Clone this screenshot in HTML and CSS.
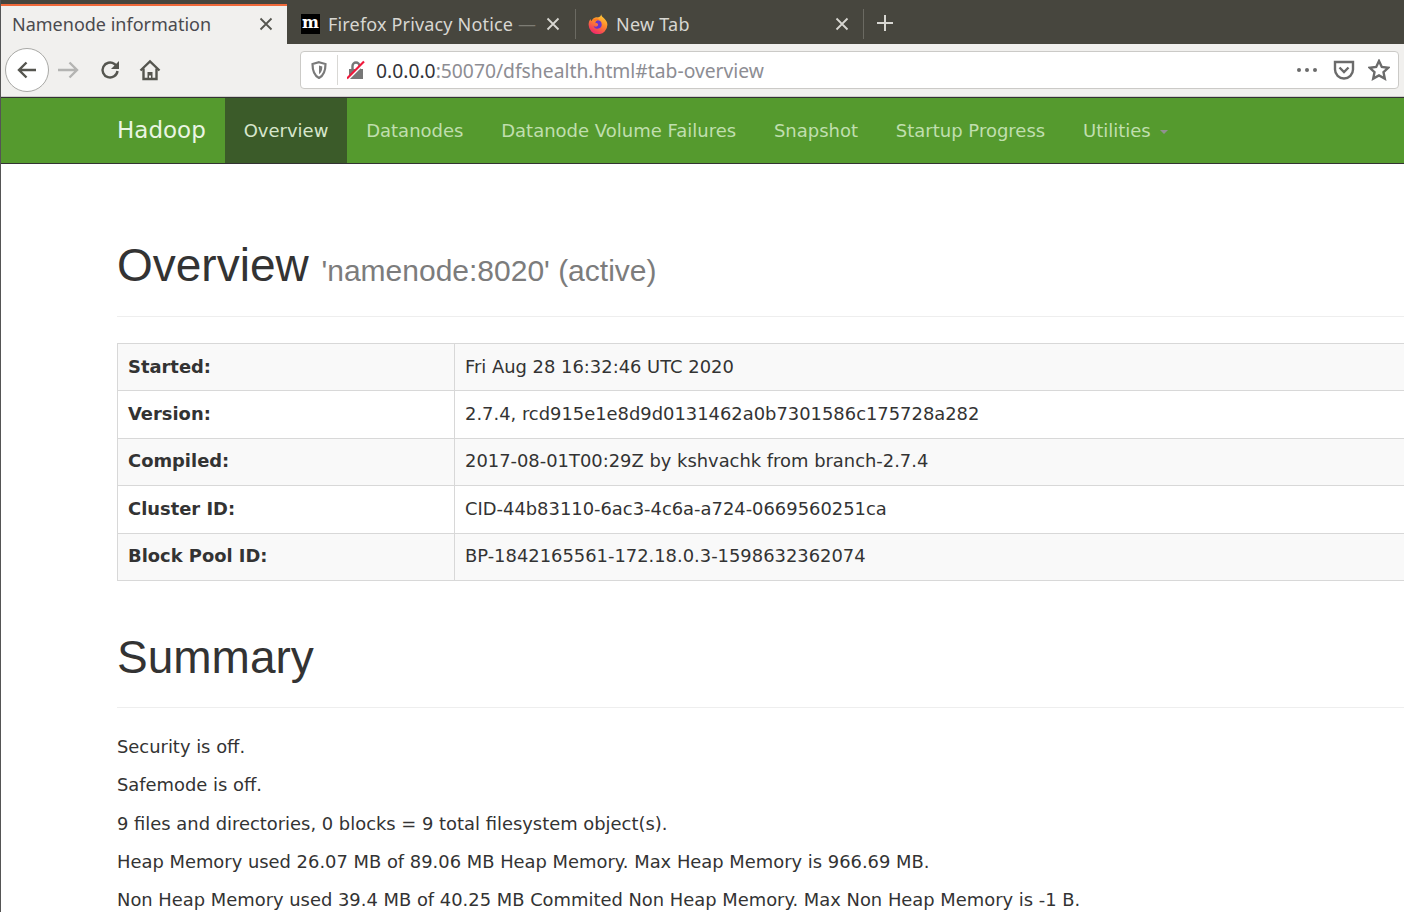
FILE: index.html
```html
<!DOCTYPE html>
<html lang="en">
<head>
    <meta charset="UTF-8">
    <title>Namenode information</title>
    <link rel="stylesheet" href="styles.css">
</head>
<body>
    <div class="tabbar">
        <div class="tab tab-active">
            <span class="tab-title">Namenode information</span>
            <svg class="tab-close" viewBox="0 0 14 14"><path d="M1.500 1.500l11 11M12.500 1.500l-11 11"/></svg>
        </div>
        <div class="tab tab-second">
            <span class="favicon-m">m</span>
            <span class="tab-title">Firefox Privacy Notice <span class="tab-fade">—</span></span>
            <svg class="tab-close" viewBox="0 0 14 14"><path d="M1.500 1.500l11 11M12.500 1.500l-11 11"/></svg>
        </div>
        <div class="tab tab-third">
            <svg class="favicon-fx" viewBox="0 0 20 20">
                <defs>
                    <linearGradient id="fxbody" x1="0.8" y1="0" x2="0.3" y2="1">
                        <stop offset="0" stop-color="#ffd53a"/>
                        <stop offset="0.45" stop-color="#ff8a2a"/>
                        <stop offset="1" stop-color="#f0226e"/>
                    </linearGradient>
                </defs>
                <path d="M13 0c.4 2 1.500 3 3 4.300 2 1.800 3.400 3.800 3.400 6.500A9.300 9.300 0 0 1 .6 10.800C.6 8.500 1.300 6.500 2.600 5c0 1 .4 1.600 1 2C4.500 4.500 7 3 9.800 3.400 11.800 3 13.300 2 13 0z" fill="url(#fxbody)"/>
                <path d="M9.500 6.300a4.200 4.200 0 1 1-4 5.500c1 1 3 1.200 4 .2 1-.8.8-2.300-.5-2.800-.6-.2-1.200-.1-1.700.2.200-1.600.9-2.700 2.200-3.100z" fill="#6a35c9"/>
                <path d="M5 5.500c2.500-1.500 5-1 6.500.2-1.800-.2-3 .4-3.500 1.400-1.200.2-2.400-.4-3-1.600z" fill="#ff7a1f"/>
            </svg>
            <span class="tab-title">New Tab</span>
            <svg class="tab-close" viewBox="0 0 14 14"><path d="M1.500 1.500l11 11M12.500 1.500l-11 11"/></svg>
        </div>
        <svg class="new-tab" viewBox="0 0 18 18"><path d="M9 1v16M1 9h16"/></svg>
    </div>

    <div class="toolbar">
        <div class="back-btn">
            <svg viewBox="0 0 22 22"><path d="M20 11H3M10.500 3.500L3 11l7.500 7.500"/></svg>
        </div>
        <svg class="tool-icon icon-forward" viewBox="0 0 22 22"><path d="M1 11h19M12.500 3.500L20 11l-7.500 7.500"/></svg>
        <svg class="tool-icon icon-reload" viewBox="0 0 22 22"><path d="M18.500 12A7.500 7.500 0 1 1 15.500 5L18 7.500"/><path class="solid" d="M20 2v8h-8z"/></svg>
        <svg class="tool-icon icon-home" viewBox="0 0 22 22"><path d="M1.500 11.500L11 2.500l9.500 9"/><path d="M4.500 9.500V20h13V9.500"/><path class="solid" d="M8.500 20v-7h5v7h-1.500v-3.500h-2V20z"/></svg>
        <div class="urlbar">
            <svg class="url-shield" viewBox="0 0 16 18"><path d="M8 1.200l6.500 1.800c0 7-1.500 11.500-6.500 14-5-2.500-6.500-7-6.500-14z"/><path class="solid" d="M8 4.500l3.300.9c0 3.500-.8 6-3.300 7.800z"/></svg>
            <span class="url-sep"></span>
            <svg class="url-lock" viewBox="0 0 18 20">
                <path class="lock-body" d="M2 9h14v10H2z"/>
                <path class="lock-arc" d="M5.500 9V6a3.500 3.500 0 0 1 7 0v3"/>
                <path class="lock-gap" d="M1 19.500L18 2.500"/>
                <path class="lock-slash" d="M0 18.500L17 1.500"/>
            </svg>
            <span class="url-text"><span class="url-host">0.0.0.0</span>:50070/dfshealth.html#tab-overview</span>
            <svg class="url-icon url-dots" viewBox="0 0 22 6"><circle cx="3" cy="3" r="2"/><circle cx="11" cy="3" r="2"/><circle cx="19" cy="3" r="2"/></svg>
            <svg class="url-icon url-pocket" viewBox="0 0 22 20"><path d="M2 2h18v7.500a9 9 0 0 1-18 0z"/><path d="M6.500 7.500L11 12l4.500-4.500"/></svg>
            <svg class="url-icon url-star" viewBox="0 0 22 22"><path d="M11 2l2.800 6 6.400.8-4.700 4.400 1.300 6.400L11 16.400l-5.800 3.200 1.300-6.400L1.800 8.800 8.200 8z"/></svg>
        </div>
    </div>

    <nav class="navbar">
        <a class="brand">Hadoop</a>
        <a class="nav-link nav-active">Overview</a>
        <a class="nav-link">Datanodes</a>
        <a class="nav-link">Datanode Volume Failures</a>
        <a class="nav-link">Snapshot</a>
        <a class="nav-link">Startup Progress</a>
        <a class="nav-link">Utilities <span class="caret"></span></a>
    </nav>

    <div class="content">
        <div class="page-header">
            <h1>Overview <small>'namenode:8020' (active)</small></h1>
        </div>
        <table class="info">
            <tr><th>Started:</th><td>Fri Aug 28 16:32:46 UTC 2020</td></tr>
            <tr><th>Version:</th><td>2.7.4, rcd915e1e8d9d0131462a0b7301586c175728a282</td></tr>
            <tr><th>Compiled:</th><td>2017-08-01T00:29Z by kshvachk from branch-2.7.4</td></tr>
            <tr><th>Cluster ID:</th><td>CID-44b83110-6ac3-4c6a-a724-0669560251ca</td></tr>
            <tr><th>Block Pool ID:</th><td>BP-1842165561-172.18.0.3-1598632362074</td></tr>
        </table>
        <div class="page-header summary-header">
            <h1>Summary</h1>
        </div>
        <p>Security is off.</p>
        <p>Safemode is off.</p>
        <p>9 files and directories, 0 blocks = 9 total filesystem object(s).</p>
        <p>Heap Memory used 26.07 MB of 89.06 MB Heap Memory. Max Heap Memory is 966.69 MB.</p>
        <p>Non Heap Memory used 39.4 MB of 40.25 MB Commited Non Heap Memory. Max Non Heap Memory is -1 B.</p>
    </div>
</body>
</html>
```

FILE: styles.css
```css
html, body {
    margin: 0;
    height: 912px;
    overflow: hidden;
}
body {
    font-family: "DejaVu Sans", sans-serif;
    background-color: #fff;
    color: #333;
    border-left: 1px solid #555;
}

/* browser tabs */
.tabbar {
    height: 44px;
    display: flex;
    background-color: #47463e;
    font-family: "Noto Sans", sans-serif;
    font-size: 18px;
    color: #d8d7d2;
}
.tab {
    display: flex;
    align-items: center;
    box-sizing: border-box;
    flex: none;
}
.tab-active {
    width: 286px;
    padding: 0 14px 2px 11px;
    margin-top: 4px;
    background-color: #f1f0ee;
    border-top: 2px solid #f0693a;
    color: #4a4a4f;
}
.tab-second {
    width: 289px;
    padding: 0 15px 0 14px;
    border-right: 1px solid #6b6a62;
    margin: 9px 0 5px;
}
.tab-third {
    width: 288px;
    padding: 0 14px 0 12px;
    border-right: 1px solid #6b6a62;
    margin: 9px 0 5px;
}
.tab-title {
    flex: 1;
    white-space: nowrap;
}
.tab-second .tab-title {
    letter-spacing: 0.17px;
}
.tab-third .tab-title {
    letter-spacing: 0.25px;
}
.tab-fade {
    color: #7d7c74;
}
.tab-close {
    width: 14px;
    height: 14px;
    fill: none;
    stroke: currentColor;
    stroke-width: 1.8;
    flex: none;
}
.tab-active .tab-close {
    stroke: #55554f;
}
.favicon-m {
    width: 19px;
    height: 20px;
    margin-right: 8px;
    background-color: #000;
    color: #fff;
    font: bold 16px/17px "DejaVu Serif", serif;
    letter-spacing: 0;
    text-align: center;
    flex: none;
}
.favicon-fx {
    width: 20px;
    height: 20px;
    margin-right: 8px;
    flex: none;
}
.new-tab {
    width: 18px;
    height: 18px;
    margin: 14px 0 0 12px;
    fill: none;
    stroke: #d8d7d2;
    stroke-width: 2;
}

/* toolbar */
.toolbar {
    height: 52px;
    display: flex;
    align-items: center;
    padding-left: 4px;
    background-color: #f1f0ee;
    border-bottom: 1px solid #cfcecb;
}
.toolbar svg {
    fill: none;
    stroke: #55554f;
    stroke-width: 2.4;
}
.back-btn {
    width: 42px;
    height: 42px;
    border: 1px solid #a9a9a6;
    border-radius: 50%;
    background-color: #fff;
    display: flex;
    align-items: center;
    justify-content: center;
    flex: none;
}
.back-btn svg {
    width: 22px;
    height: 22px;
}
.tool-icon {
    width: 22px;
    height: 22px;
    flex: none;
}
.toolbar .icon-forward {
    margin-left: 8px;
    stroke: #b4b4b2;
}
.icon-reload {
    margin-left: 20px;
}
.icon-home {
    margin-left: 18px;
}
.toolbar .solid {
    fill: #55554f;
    stroke: none;
}
.urlbar {
    margin-left: 139px;
    width: 1097px;
    height: 36px;
    display: flex;
    align-items: center;
    background-color: #fff;
    border: 1px solid #cbcac7;
    border-radius: 4px;
    font-family: "Noto Sans", sans-serif;
    font-size: 19.3px;
    color: #8d8d93;
}
.url-shield {
    width: 16px;
    height: 18px;
    margin-left: 10px;
    flex: none;
}
.toolbar .url-shield {
    stroke: #7a7a7a;
    stroke-width: 2.2;
}
.toolbar .url-shield .solid {
    fill: #7a7a7a;
}
.url-sep {
    width: 1px;
    height: 30px;
    margin-left: 10px;
    background-color: #d9d8d5;
    flex: none;
}
.url-lock {
    width: 18px;
    height: 20px;
    margin-left: 9px;
    flex: none;
}
.toolbar .lock-body {
    fill: #777;
    stroke: none;
}
.toolbar .lock-arc {
    stroke: #777;
}
.toolbar .lock-gap {
    stroke: #fff;
    stroke-width: 2;
}
.toolbar .lock-slash {
    stroke: #f0193c;
    stroke-width: 2.2;
}
.url-text {
    flex: 1;
    margin-left: 11px;
    white-space: nowrap;
}
.url-host {
    color: #333338;
}
.url-icon {
    flex: none;
}
.toolbar .url-dots {
    width: 22px;
    height: 6px;
    fill: #6b6b6b;
    stroke: none;
}
.url-pocket {
    width: 22px;
    height: 20px;
    margin-left: 15px;
}
.url-star {
    width: 22px;
    height: 22px;
    margin: 0 8px 0 13px;
}
.toolbar .url-pocket, .toolbar .url-star {
    stroke: #6b6b6b;
}

/* hadoop navbar */
.navbar {
    height: 67px;
    display: flex;
    box-sizing: border-box;
    padding-left: 97px;
    background-color: #559a2e;
    border-top: 1px solid #333;
    border-bottom: 1px solid #333;
    align-items: stretch;
    font-size: 18px;
}
.navbar a {
    display: flex;
    align-items: center;
    padding: 0 18.9px;
    color: #c0dfae;
    white-space: nowrap;
}
.navbar .brand {
    font-size: 23px;
    color: #eaf5e3;
    padding: 0 19px 1px;
}
.navbar .nav-active {
    background-color: #3b5b29;
    color: #d6e6cc;
}
.caret {
    display: inline-block;
    margin-left: 9px;
    margin-top: 3px;
    border-top: 4px solid #919191;
    border-left: 4px solid transparent;
    border-right: 4px solid transparent;
}

/* page */
.content {
    padding-left: 116px;
    font-size: 17.9px;
}
.page-header {
    margin: 71px 0 26px;
    padding-bottom: 21px;
    border-bottom: 1px solid #eee;
}
.summary-header {
    margin-top: 46px;
    padding-bottom: 20px;
}
h1 {
    margin: 0;
    font: 500 46px/60px "Liberation Sans", Arial, sans-serif;
    color: #333;
}
h1 small {
    font-size: 30px;
    line-height: 0;
    color: #7c7c7c;
}
.info {
    width: 1400px;
    border-collapse: collapse;
}
.info th, .info td {
    border: 1px solid #d8d8d8;
    padding: 0 10px 2px;
    height: 44.4px;
    text-align: left;
    white-space: nowrap;
}
.info th {
    width: 316px;
    font-weight: bold;
}
.info tr:nth-child(odd) {
    background-color: #f9f9f9;
}
p {
    margin: 0 0 13.3px;
    line-height: 25px;
    white-space: nowrap;
}
```
